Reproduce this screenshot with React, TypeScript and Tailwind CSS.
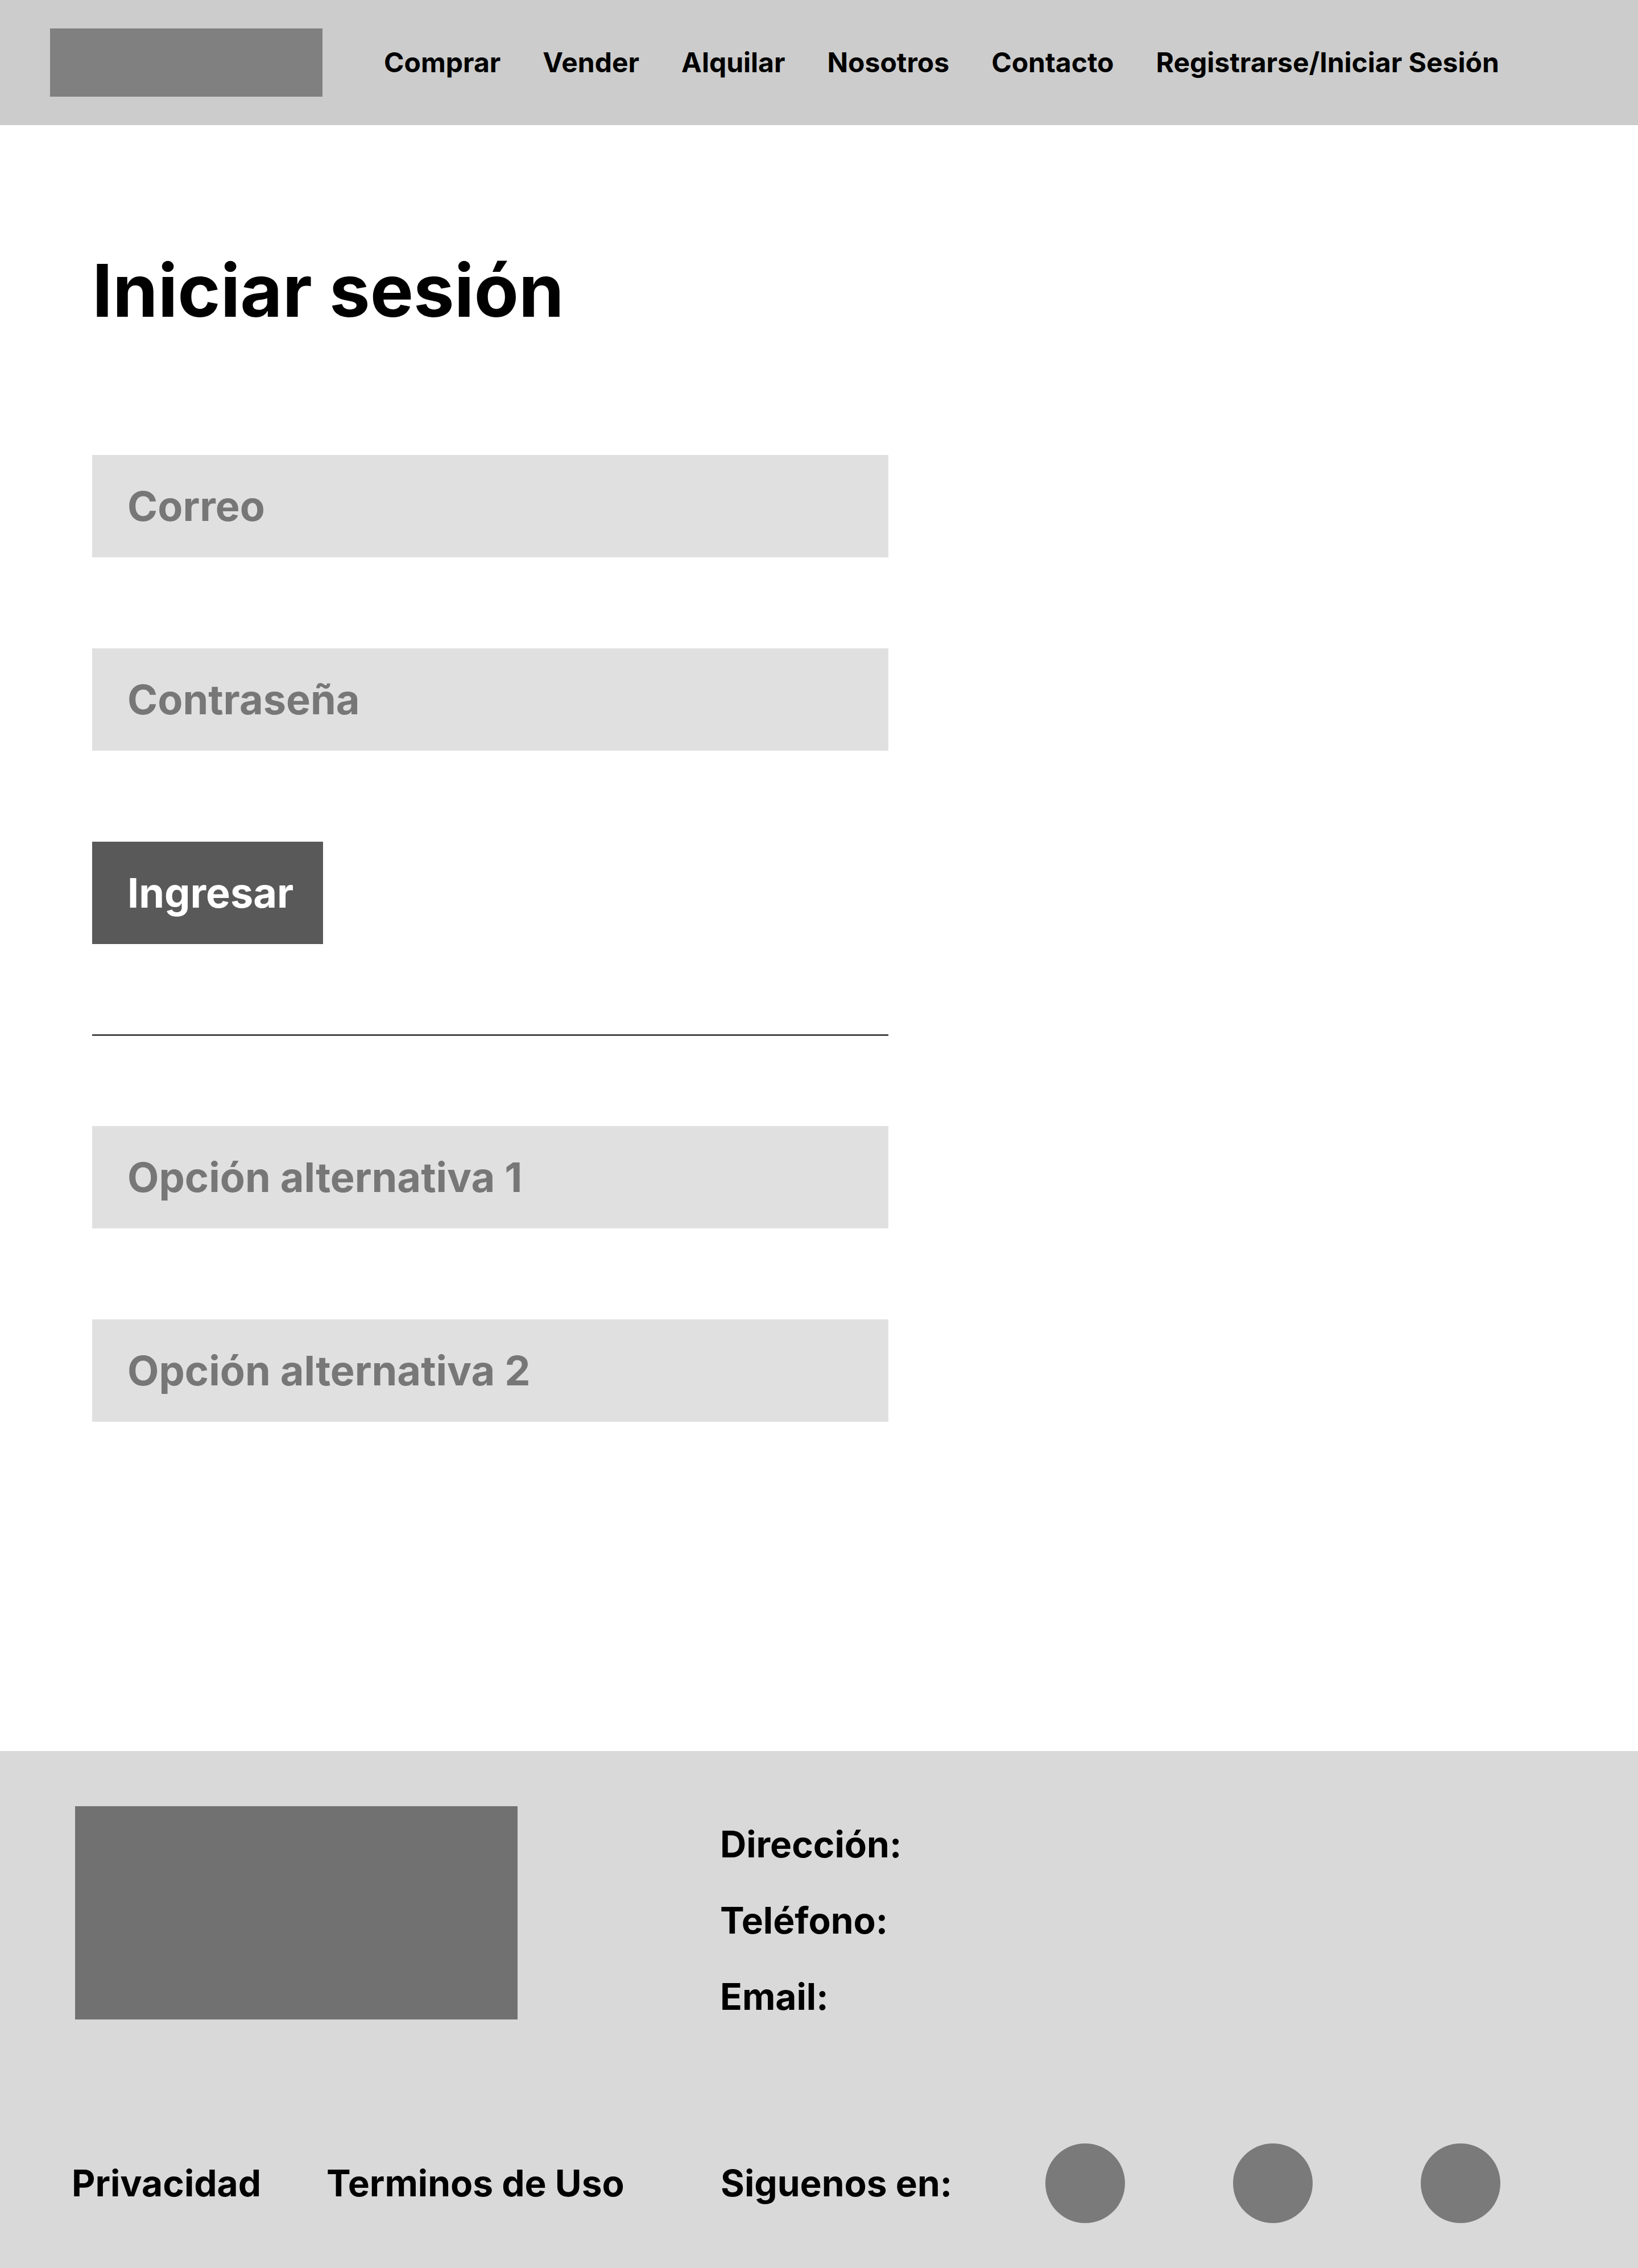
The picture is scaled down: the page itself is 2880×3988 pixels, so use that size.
const NAV = ['Comprar', 'Vender', 'Alquilar', 'Nosotros', 'Contacto', 'Registrarse/Iniciar Sesión'];

function Field({ label }: { label: string }) {
  return (
    <div className="flex h-[180px] w-full items-center bg-[#e0e0e0] pl-[62px]">
      <span className="text-[72px] font-bold leading-none text-[#777777]">{label}</span>
    </div>
  );
}

export default function App() {
  return (
    <div className="w-[2880px] bg-white font-['Inter',sans-serif] text-black">
      <header className="flex h-[220px] items-center bg-[#cccccc] pl-[88px]">
        <div className="h-[120px] w-[479px] bg-[#808080]" />
        <nav className="ml-[108px] flex gap-[74px] text-[48px] font-bold leading-none">
          {NAV.map((item) => (
            <a key={item}>{item}</a>
          ))}
        </nav>
      </header>

      <main className="h-[2859px] pl-[162px] pt-[227px]">
        <h1 className="text-[128px] font-bold leading-none">Iniciar sesión</h1>

        <div className="mt-[225px] flex w-[1400px] flex-col gap-[160px]">
          <Field label="Correo" />
          <Field label="Contraseña" />
          <button className="flex h-[180px] w-[406px] items-center bg-[#595959] pl-[62px] text-[72px] font-bold leading-none text-white">
            Ingresar
          </button>
          <div className="-my-[1px] h-[2px] w-full bg-black" />
          <Field label="Opción alternativa 1" />
          <Field label="Opción alternativa 2" />
        </div>
      </main>

      <footer className="h-[909px] bg-[#d9d9d9] pl-[132px] pt-[97px]">
        <div className="grid grid-cols-[1138px_1fr]">
          <div className="h-[375px] w-[778px] bg-[#717171]" />
          <ul className="-ml-[4px] flex flex-col text-[64px] font-bold leading-[134px]">
            <li>Dirección:</li>
            <li>Teléfono:</li>
            <li>Email:</li>
          </ul>
        </div>

        <div className="mt-[191px] grid h-[140px] grid-cols-[1138px_1fr] items-center text-[64px] font-bold leading-none">
          <div className="-ml-[6px] grid grid-cols-[448px_1fr]">
            <a>Privacidad</a>
            <a>Terminos de Uso</a>
          </div>
          <div className="-ml-[3px] flex items-center">
            <span className="w-[571px]">Siguenos en:</span>
            <div className="flex gap-[190px]">
              <span className="h-[140px] w-[140px] rounded-full bg-[#7a7a7a]" />
              <span className="h-[140px] w-[140px] rounded-full bg-[#7a7a7a]" />
              <span className="h-[140px] w-[140px] rounded-full bg-[#7a7a7a]" />
            </div>
          </div>
        </div>
      </footer>
    </div>
  );
}
